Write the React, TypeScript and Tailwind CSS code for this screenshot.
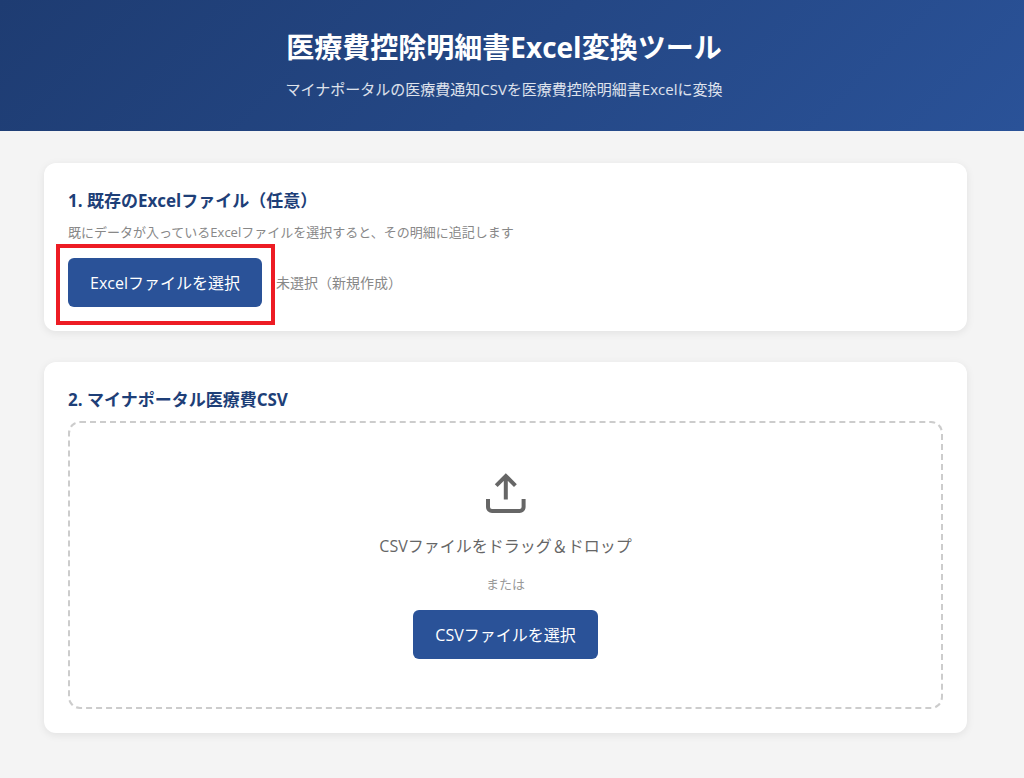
import React from "react";

function Card({ title, children }: { title: string; children: React.ReactNode }) {
  return (
    <section className="rounded-xl bg-white p-6 shadow-[0_2px_8px_rgba(0,0,0,0.08)]">
      <h2 className="mb-[7px] text-[17px] leading-7 font-bold text-[#1e3f78]">{title}</h2>
      {children}
    </section>
  );
}

function PrimaryButton({ children }: { children: React.ReactNode }) {
  return (
    <button
      type="button"
      className="cursor-pointer rounded-md bg-[#2a5298] px-[22px] pt-[13px] pb-3 text-base leading-6 text-white"
    >
      {children}
    </button>
  );
}

function UploadIcon() {
  return (
    <svg className="size-12" viewBox="0 0 48 48" fill="none" stroke="#666666" strokeWidth="4" aria-hidden="true">
      <path d="M6 28V36A4 4 0 0 0 10 40H37.6A4 4 0 0 0 41.6 36V28" />
      <path d="M23.8 28.4V5.4M14.2 14.6L23.8 5L33.4 14.6" />
    </svg>
  );
}

export default function App() {
  return (
    <div className="min-h-screen bg-[#f4f4f4] font-['Open_Sans','Noto_Sans_CJK_JP',sans-serif]">
      <header className="bg-linear-135 from-[#1e3c72] to-[#2a5298] pt-6 pr-4 pb-[30px] text-center">
        <h1 className="text-[28px] leading-[46px] font-bold text-white">医療費控除明細書Excel変換ツール</h1>
        <p className="mt-[7px] text-[15px] leading-6 text-white/85">
          マイナポータルの医療費通知CSVを医療費控除明細書Excelに変換
        </p>
      </header>
      <main className="flex flex-col gap-[31px] pt-8 pr-[57px] pb-11 pl-11">
        <Card title="1. 既存のExcelファイル（任意）">
          <p className="mb-4 text-[13px] leading-5 text-[#888888]">
            既にデータが入っているExcelファイルを選択すると、その明細に追記します
          </p>
          <div className="flex items-center gap-[14px]">
            <div className="relative">
              <PrimaryButton>Excelファイルを選択</PrimaryButton>
              <div className="pointer-events-none absolute -top-[14px] -right-[13px] -bottom-[18px] -left-3 border-4 border-[#ed1c24]" />
            </div>
            <span className="text-sm text-[#888888]">未選択（新規作成）</span>
          </div>
        </Card>
        <Card title="2. マイナポータル医療費CSV">
          <div className="flex flex-col items-center rounded-xl border-2 border-dashed border-[#cccccc] py-12">
            <UploadIcon />
            <p className="mt-[15px] text-base leading-6 text-[#666666]">CSVファイルをドラッグ＆ドロップ</p>
            <p className="my-4 text-[13px] leading-5 text-[#999999]">または</p>
            <PrimaryButton>CSVファイルを選択</PrimaryButton>
          </div>
        </Card>
      </main>
    </div>
  );
}
